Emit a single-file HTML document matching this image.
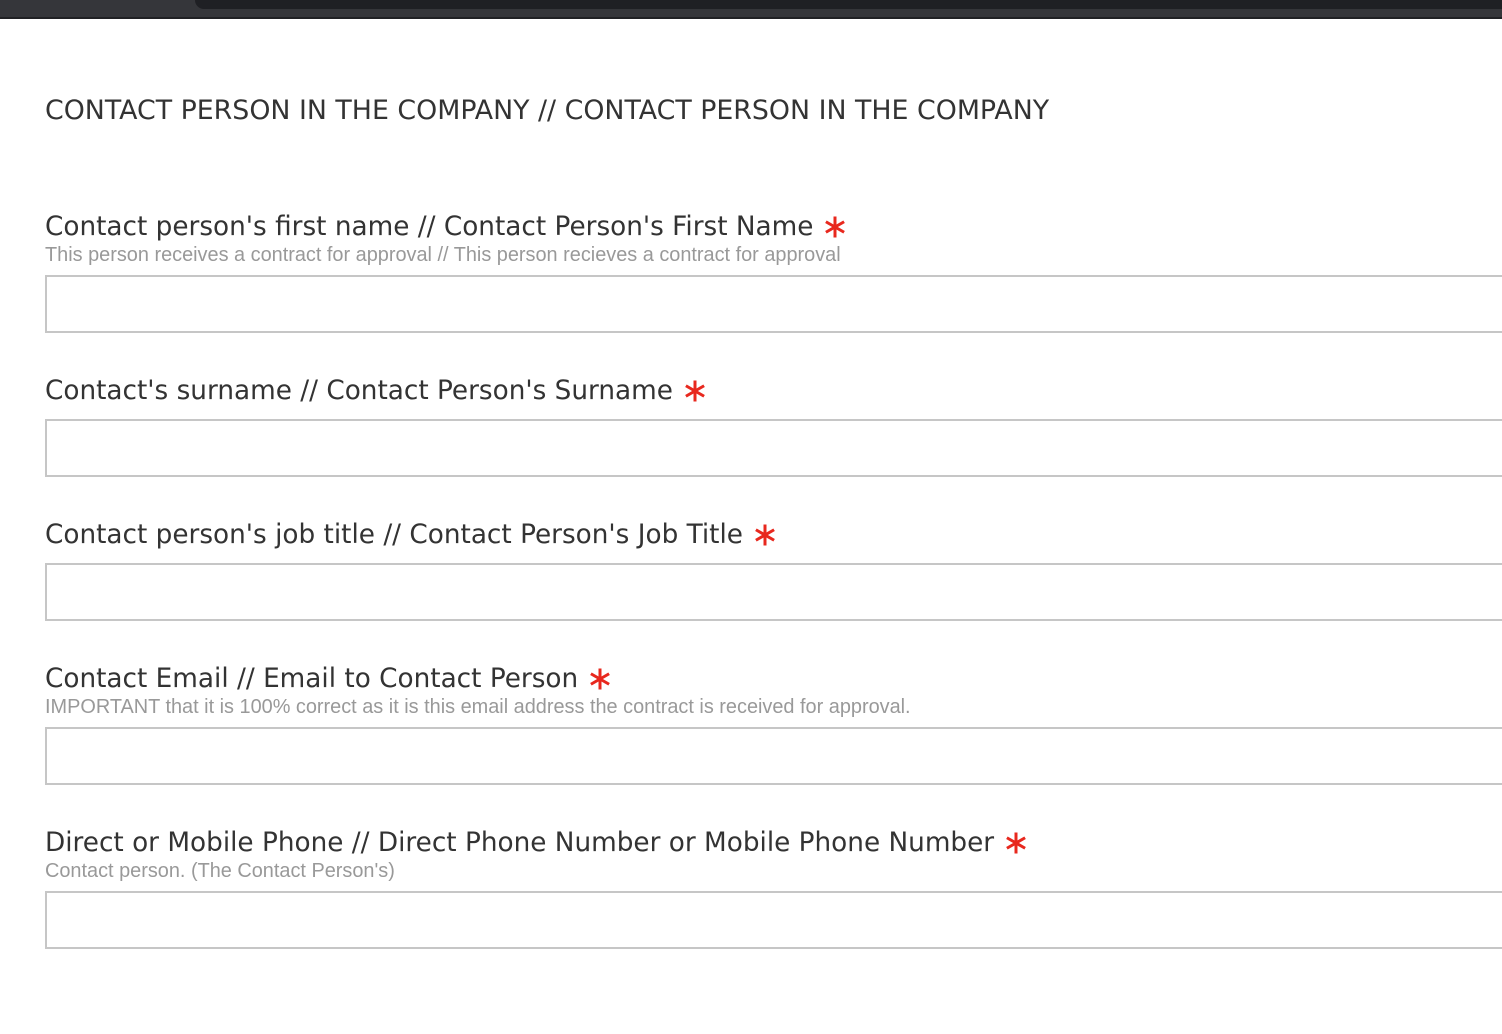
<!DOCTYPE html>
<html><head><meta charset="utf-8"><style>
html,body{margin:0;padding:0;background:#fff;width:1502px;height:1034px;overflow:hidden}
.top{position:absolute;left:0;top:0;width:1502px;height:17px;background:#35363a}
.tab{position:absolute;left:195px;top:0;width:1320px;height:9px;background:#1f2024;border-bottom-left-radius:16px}
.line{position:absolute;left:0;top:17px;width:1502px;height:2px;background:#202124}
.t{position:absolute;left:45px;font-family:"DejaVu Sans",sans-serif;color:#333;white-space:nowrap}
h1.t{font-size:26.8px;font-weight:normal;margin:0;top:95px}
.lab{font-size:26.3px}
.star{display:inline-block;width:22px;height:22px;margin-left:11px;vertical-align:-3px}
.hint{position:absolute;left:45px;font-family:"Liberation Sans",sans-serif;font-size:19.9px;color:#999;white-space:nowrap}
.in{position:absolute;left:45px;width:1500px;height:54px;border:2px solid #c6c6c6;box-sizing:content-box}
</style></head><body>
<svg width="0" height="0" style="position:absolute"><defs><g id="s"><path d="M11 0.5V21.5M1.9 5.75L20.1 16.25M1.9 16.25L20.1 5.75" stroke="#e8281e" stroke-width="3" fill="none"/></g></defs></svg>
<div class="top"></div><div class="tab"></div><div class="line"></div>
<h1 class="t">CONTACT PERSON IN THE COMPANY // CONTACT PERSON IN THE COMPANY</h1>

<div class="t lab" style="top:212px">Contact person's first name // Contact Person's First Name<svg class="star" viewBox="0 0 22 22"><use href="#s"/></svg></div>
<div class="hint" style="top:244px">This person receives a contract for approval // This person recieves a contract for approval</div>
<div class="in" style="top:275px"></div>

<div class="t lab" style="top:376px">Contact's surname // Contact Person's Surname<svg class="star" viewBox="0 0 22 22"><use href="#s"/></svg></div>
<div class="in" style="top:419px"></div>

<div class="t lab" style="top:520px">Contact person's job title // Contact Person's Job Title<svg class="star" viewBox="0 0 22 22"><use href="#s"/></svg></div>
<div class="in" style="top:563px"></div>

<div class="t lab" style="top:664px">Contact Email // Email to Contact Person<svg class="star" viewBox="0 0 22 22"><use href="#s"/></svg></div>
<div class="hint" style="top:696px">IMPORTANT that it is 100% correct as it is this email address the contract is received for approval.</div>
<div class="in" style="top:727px"></div>

<div class="t lab" style="top:828px">Direct or Mobile Phone // Direct Phone Number or Mobile Phone Number<svg class="star" viewBox="0 0 22 22"><use href="#s"/></svg></div>
<div class="hint" style="top:860px">Contact person. (The Contact Person's)</div>
<div class="in" style="top:891px"></div>
</body></html>
